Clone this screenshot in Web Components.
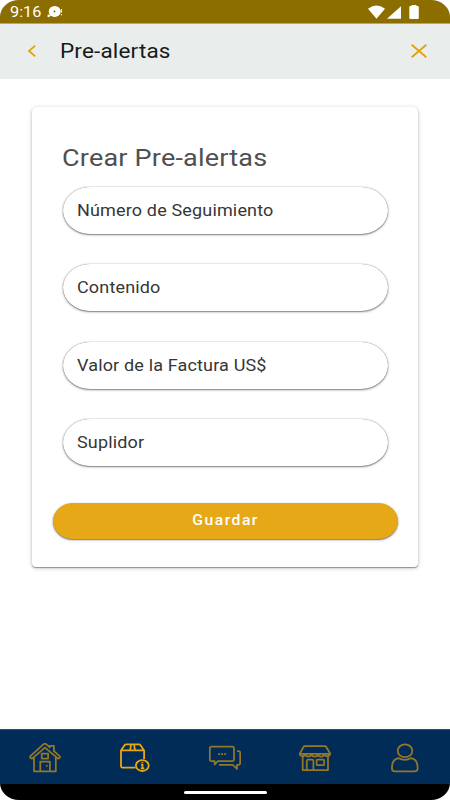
<!DOCTYPE html>
<html lang="es">
<head>
  <meta charset="utf-8">
  <meta name="viewport" content="width=device-width, initial-scale=1">
  <title>Pre-alertas</title>
  <style>
    html, body {
      margin: 0;
      height: 100%;
      background: #fff;
      overflow: hidden;
    }
    body {
      font-family: Roboto, "Liberation Sans", sans-serif;
    }
  </style>
</head>
<body>
  <app-screen>
    <status-bar slot="top" time="9:16"></status-bar>
    <app-header slot="top">Pre-alertas</app-header>
    <form-card heading="Crear Pre-alertas">
      <text-field>Número de Seguimiento</text-field>
      <text-field>Contenido</text-field>
      <text-field>Valor de la Factura US$</text-field>
      <text-field>Suplidor</text-field>
      <save-button slot="action">Guardar</save-button>
    </form-card>
    <tab-bar slot="bottom" active="package"></tab-bar>
    <gesture-bar slot="bottom"></gesture-bar>
  </app-screen>

  <script>
    class BaseElement extends HTMLElement {
      constructor() {
        super()
        this.attachShadow({ mode: "open" })
      }
      connectedCallback() {
        const template = document.createElement("template")
        template.innerHTML = `<style>
          :host, * { box-sizing: border-box; }
          .wide { display: inline-block; white-space: nowrap; transform: scaleX(1.125); transform-origin: left center; }
          svg { display: block; }
          ${this.getStyles()}
        </style>${this.getTemplate()}`
        this.shadowRoot.appendChild(template.content.cloneNode(true))
      }
    }

    class AppScreen extends BaseElement {
      getTemplate() {
        return `
          <slot name="top"></slot>
          <main><slot></slot></main>
          <slot name="bottom"></slot>
        `
      }
      getStyles() {
        return `
          :host {
            display: flex;
            flex-direction: column;
            width: 450px;
            height: 800px;
            background: #fff;
            border-radius: 19px / 17px;
            overflow: hidden;
          }
          main { flex: 1; padding: 28px 32px 0; }
        `
      }
    }

    class StatusBar extends BaseElement {
      getTemplate() {
        return `
          <span class="wide">${this.getAttribute("time")}</span>
          <svg class="notice" width="18" height="14" viewBox="0 0 18 14">
            <ellipse cx="7.7" cy="6.4" rx="6" ry="5.5" fill="#fff"/>
            <circle cx="1.7" cy="10.9" r="1.3" fill="#fff"/>
            <path d="M2.5 10.5l3-2 2 3z" fill="#fff"/>
            <circle cx="7.5" cy="6.5" r="1" fill="#8c6d00"/>
            <path d="M14.6 4v3.6M14.6 9v1.3" stroke="#fff" stroke-width="1"/>
          </svg>
          <svg class="signals" width="54" height="16" viewBox="0 0 54 16" fill="#fff">
            <path d="M1 4.7Q9.5-1.6 18 4.7L9.5 14.7z"/>
            <path d="M34 2.2V14.7H20z"/>
            <path d="M44.5 2V1h5v1h1.2q1.1 0 1.1 1v11q0 1-1.1 1h-7.3q-1.1 0-1.1-1V3q0-1 1.1-1z"/>
          </svg>
        `
      }
      getStyles() {
        return `
          :host {
            display: flex;
            align-items: center;
            flex: none;
            height: 24px;
            padding: 1px 29.5px 0 9.5px;
            background: #8c6d00;
            border-bottom: 1px solid #b6a674;
            color: #fff;
            font-size: 14.5px;
          }
          .notice { margin-left: 10px; }
          .signals { margin-left: auto; }
        `
      }
    }

    class AppHeader extends BaseElement {
      getTemplate() {
        return `
          <svg width="10" height="14" viewBox="0 0 10 14"><path d="M8.2 1.6L2 7l6.2 5.4" fill="none" stroke="#e5a00b" stroke-width="1.8"/></svg>
          <h1 class="wide"><slot></slot></h1>
          <svg class="close" width="18" height="16" viewBox="0 0 18 16"><path d="M1.7 1.7l14.6 12.6M16.3 1.7L1.7 14.3" fill="none" stroke="#e5a00b" stroke-width="1.8"/></svg>
        `
      }
      getStyles() {
        return `
          :host {
            display: flex;
            align-items: center;
            flex: none;
            height: 55px;
            padding: 0 22.5px 1px 27px;
            background: #e9eeed;
            color: #181a1a;
          }
          h1 { margin: 0 0 0 23px; font-size: 20px; font-weight: 400; letter-spacing: .15px; }
          .close { margin-left: auto; }
        `
      }
    }

    class FormCard extends BaseElement {
      getTemplate() {
        return `
          <h2 class="wide">${this.getAttribute("heading")}</h2>
          <div class="fields"><slot></slot></div>
          <slot name="action"></slot>
        `
      }
      getStyles() {
        return `
          :host {
            display: flex;
            flex-direction: column;
            width: 386px;
            height: 460px;
            padding: 36px 20.5px 0 21px;
            border-radius: 5px 5px 4px 4px;
            background: #fff;
            box-shadow: 0 1px 1px rgb(0 0 0 / 34%), 0 1px 4px rgb(0 0 0 / 24%);
          }
          h2 {
            align-self: flex-start;
            margin: 0 0 13px 9px;
            font-size: 24px;
            line-height: 31px;
            font-weight: 400;
            letter-spacing: .18px;
            color: #505052;
          }
          .fields {
            display: flex;
            flex-direction: column;
            gap: 30.3px;
            margin: 0 9.5px 37.5px;
          }
        `
      }
    }

    class TextField extends BaseElement {
      getTemplate() {
        return `<span class="wide"><slot></slot></span>`
      }
      getStyles() {
        return `
          :host {
            display: flex;
            align-items: center;
            height: 47px;
            padding: 0 14.5px;
            border-radius: 27px / 23.5px;
            background: #fff;
            color: #363636;
            font-size: 16px;
            letter-spacing: .14px;
            box-shadow: 0 0 1px rgb(0 0 0 / 55%), 0 1px 1px rgb(0 0 0 / 26%), 0 1px 3px rgb(0 0 0 / 28%);
          }
        `
      }
    }

    class SaveButton extends BaseElement {
      getTemplate() {
        return `<button><span class="wide"><slot></slot></span></button>`
      }
      getStyles() {
        return `
          :host { display: block; }
          button {
            display: block;
            width: 100%;
            height: 36px;
            padding: 0 0 2px;
            border: 0;
            border-radius: 20px / 18px;
            background: #e6a817;
            color: #fff;
            font: 500 14px Roboto, "Liberation Sans", sans-serif;
            letter-spacing: 1.3px;
            box-shadow: 0 1px 1px rgb(0 0 0 / 34%), 0 1px 3px rgb(0 0 0 / 30%);
          }
          button .wide { transform-origin: center; }
        `
      }
    }

    class TabBar extends BaseElement {
      getTemplate() {
        const tabs = [
          {name: "home", icon: `
            <path d="M1.1 13.4L14.6 1.2q1.3-1 2.6 0l3.5 3.2V2.8h4.2v5.4l6 5.2q.3 1.8-1.8 2.2L16 4.6 3 15.6q-2.2-.4-1.9-2.2zM5 14.3V28.3H26.8V14.3M11.3 28.3V18.5h9.6v9.8M12.7 10.6h6.4v5h-6.4z"/>
            <circle cx="17.8" cy="22.8" r=".3"/>`},
          {name: "package", icon: `
            <path d="M16.5 24.6H3.7q-1.7 0-1.7-1.7V7.4L5.5 2.2q.5-.8 1.5-.8h13q1 0 1.5.8l3.6 5.2V16M2 7.3h23.1M11.1 7.3l1-5.9M16 7.3l-1-5.9"/>
            <ellipse cx="23.3" cy="22.6" rx="6.4" ry="5.4"/>
            <path d="M21.9 21.6h1.6v3.8M21.8 25.4h3.5M23.4 18.9v1.2"/>`},
          {name: "messages", icon: `
            <path d="M3 3.7H23.4q1.6 0 1.6 1.6V16.4q0 1.6-1.6 1.6H8.9L5.6 21.6V18H2.4Q.8 18 .8 16.4V5.3q0-1.6 1.6-1.6zM28 8h1.3q1.9 0 1.9 1.8V20q0 1.8-1.9 1.8H28v4.2l-4.2-4.2H10"/>
            <path d="M9.2 11.2h1.9M12.2 11.2h1.9M15.2 11.2h1.9"/>`},
          {name: "store", icon: `
            <path d="M5.7 3.2H26q.9 0 1.3.8l4 6.8H.7L4.5 4q.4-.8 1.2-.8zM.7 10.8q.4 2.4 2.8 2.4t2.9-2.4q.4 2.8 3 2.8t3.2-2.8q.4 2.8 3.2 2.8t3.2-2.8q.4 2.8 3.1 2.8t3.1-2.8q.4 2.4 3 2.4t3.1-2.4M3.7 13.3V27H29V13.3M7.8 27V18.1q0-1.4 1.4-1.4H13q1.4 0 1.4 1.4V27"/>
            <rect x="17.6" y="16.6" width="7.6" height="5.6" rx="1"/>`},
          {name: "profile", icon: `
            <ellipse cx="16" cy="7.8" rx="7.3" ry="6.4"/>
            <path d="M9.4 15.1q-6.4 1.5-6.4 9v1.6q0 2.6 3 2.6H25.6q3 0 3-2.6v-1.6q0-7.5-6.4-9-6.4 3.6-12.8 0z"/>`}
        ]
        return tabs.map(tab => `
          <div class="tab ${tab.name === this.getAttribute("active") ? "active" : ""}">
            <svg width="32" height="30" viewBox="0 0 32 30">${tab.icon}</svg>
          </div>
        `).join("")
      }
      getStyles() {
        return `
          :host {
            display: grid;
            grid-template-columns: repeat(5, 1fr);
            flex: none;
            height: 55px;
            background: #012c57;
            border-top: 1px solid #324e6c;
          }
          .tab { display: grid; place-items: center; padding-top: 2px; color: #947729; }
          .active { color: #e9a712; }
          svg {
            fill: none;
            stroke: currentColor;
            stroke-width: 1.75;
            stroke-linejoin: round;
          }
          .active svg { stroke-width: 1.8; }
        `
      }
    }

    class GestureBar extends BaseElement {
      getTemplate() {
        return `<div></div>`
      }
      getStyles() {
        return `
          :host {
            display: flex;
            align-items: center;
            justify-content: center;
            flex: none;
            height: 16px;
            background: #000;
          }
          div { width: 83px; height: 2.5px; margin-top: 1px; border-radius: 2px; background: #fff; }
        `
      }
    }

    customElements.define("app-screen", AppScreen)
    customElements.define("status-bar", StatusBar)
    customElements.define("app-header", AppHeader)
    customElements.define("form-card", FormCard)
    customElements.define("text-field", TextField)
    customElements.define("save-button", SaveButton)
    customElements.define("tab-bar", TabBar)
    customElements.define("gesture-bar", GestureBar)
  </script>
</body>
</html>
